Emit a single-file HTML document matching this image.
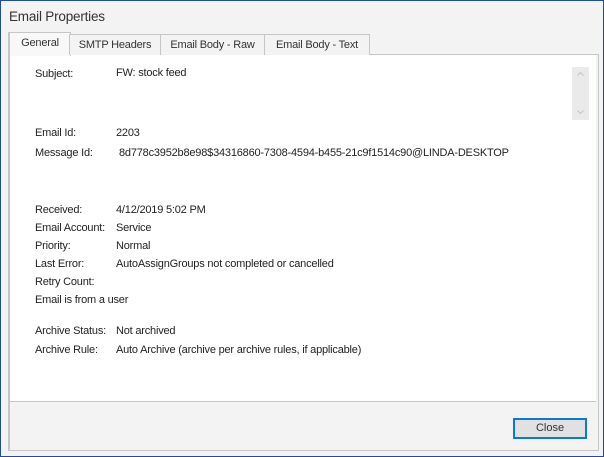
<!DOCTYPE html><html><head><style>
body{margin:0;width:604px;height:457px;overflow:hidden;font-family:"Liberation Sans",sans-serif;}
.win{position:absolute;left:0;top:0;width:602px;height:455px;border:1px solid #1e4e96;background:#f3f3f3;}
.title{position:absolute;left:8px;top:8px;font-size:13.5px;letter-spacing:-0.2px;color:#333;}
.frame{position:absolute;left:7px;top:53px;width:588px;height:395px;border:1px solid #c6c6c6;border-left-width:2px;}
.panel{position:absolute;left:9px;top:54px;width:586px;height:346px;background:#fff;border-bottom:1px solid #c6c6c6;}
.tab{position:absolute;top:33px;height:20px;border:1px solid #c6c6c6;border-bottom:none;background:#f3f3f3;font-size:11px;letter-spacing:-0.2px;color:#333;text-align:center;line-height:21px;}
.tab.act{top:31px;height:23px;background:#f8f8f8;border-width:1px 1px 0 2px;}
.t{position:absolute;font-size:11px;letter-spacing:-0.2px;color:#222;white-space:nowrap;}
.sb{position:absolute;left:571px;top:66px;width:17px;height:53px;background:#eaeaea;}
.btn{position:absolute;left:512px;top:417px;width:70px;height:17px;border:2px solid #0a78d4;background:#e1e1e1;font-size:11px;text-align:center;line-height:17px;color:#333;}
</style></head><body><div class="win">
<div class="title">Email Properties</div>
<div class="frame"></div>
<div class="panel"></div>
<div class="tab act" style="left:7px;width:60px">General</div>
<div class="tab" style="left:68px;width:90px">SMTP Headers</div>
<div class="tab" style="left:159px;width:103px">Email Body - Raw</div>
<div class="tab" style="left:263px;width:104px">Email Body - Text</div>
<div class="t" style="left:34px;top:67px">Subject:</div><div class="t" style="left:115px;top:66px">FW: stock feed</div>
<div class="sb"><svg width="17" height="53"><path d="M5.5 8.5l3-3 3 3M5.5 43.5l3 3 3-3" fill="none" stroke="#c4c4c4" stroke-width="1"/></svg></div>
<div class="t" style="left:34px;top:126px">Email Id:</div><div class="t" style="left:115px;top:126px">2203</div>
<div class="t" style="left:34px;top:146px">Message Id:</div><div class="t" style="left:118px;top:146px">8d778c3952b8e98$34316860-7308-4594-b455-21c9f1514c90@LINDA-DESKTOP</div>
<div class="t" style="left:34px;top:203px">Received:</div><div class="t" style="left:115px;top:203px">4/12/2019 5:02 PM</div>
<div class="t" style="left:34px;top:221px">Email Account:</div><div class="t" style="left:115px;top:221px">Service</div>
<div class="t" style="left:34px;top:239px">Priority:</div><div class="t" style="left:115px;top:239px">Normal</div>
<div class="t" style="left:34px;top:257px">Last Error:</div><div class="t" style="left:115px;top:257px">AutoAssignGroups not completed or cancelled</div>
<div class="t" style="left:34px;top:275px">Retry Count:</div>
<div class="t" style="left:34px;top:293px">Email is from a user</div>
<div class="t" style="left:34px;top:324px">Archive Status:</div><div class="t" style="left:115px;top:324px">Not archived</div>
<div class="t" style="left:34px;top:343px">Archive Rule:</div><div class="t" style="left:115px;top:343px">Auto Archive (archive per archive rules, if applicable)</div>
<div class="btn">Close</div>
</div></body></html>
